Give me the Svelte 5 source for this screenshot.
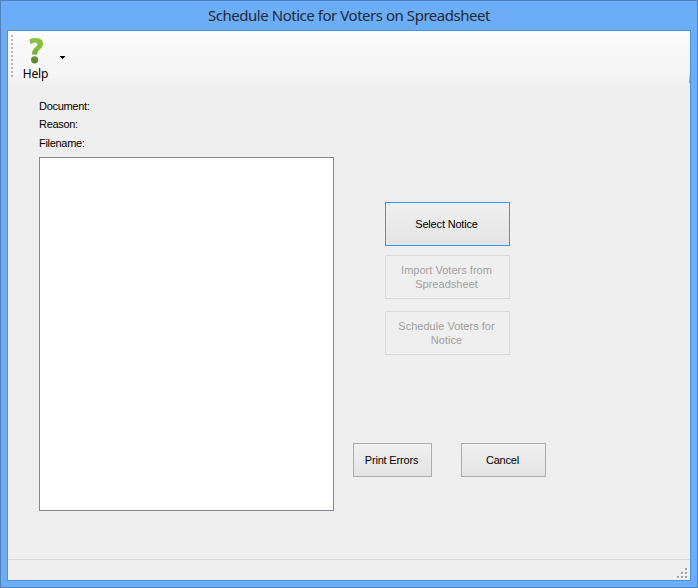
<script>
  const fields = ['Document:', 'Reason:', 'Filename:'];
  const gripDots = [[8, 0], [4, 4], [8, 4], [0, 8], [4, 8], [8, 8]];
</script>

<div class="window">
  <header class="title"><span>Schedule Notice for Voters on Spreadsheet</span></header>
  <div class="client">
    <div class="toolbar">
      <svg class="handle" width="2" height="44" viewBox="0 0 2 44">
        {#each Array(11) as _, i}
          <rect x="0" y={i * 4} width="2" height="2" fill="#b9b9b9" />
        {/each}
      </svg>
      <div class="help">
        <svg width="16" height="26" viewBox="0 0 16 26">
          <defs>
            <linearGradient id="leaf" gradientUnits="userSpaceOnUse" x1="0" y1="0" x2="0" y2="26">
              <stop offset="0" stop-color="#8cc63f" />
              <stop offset="0.4" stop-color="#83bb3c" />
              <stop offset="1" stop-color="#557f2c" />
            </linearGradient>
          </defs>
          <path d="M1.3 1.5C3.3.6 5.5.1 7.9.1C12.3.1 15 2.2 15 5.7C15 8.4 13.6 10 11.3 11.9C9.7 13.2 9.2 14.2 9.2 16.6H4.1C4 13.3 4.8 11.5 7.1 9.5C8.7 8.1 9.3 7.3 9.3 6.1C9.3 5 8.6 4.4 7.2 4.4C5.6 4.4 4.2 5.1 2.5 6.3Z" fill="url(#leaf)" />
          <circle cx="6.6" cy="21.8" r="3.6" fill="url(#leaf)" />
        </svg>
        <span>Help</span>
      </div>
      <svg class="arrow" width="5" height="3" viewBox="0 0 5 3" shape-rendering="crispEdges">
        <path d="M0 0H5V1H4V2H3V3H2V2H1V1H0Z" fill="#000" />
      </svg>
      <i class="edge"></i>
    </div>
    <main>
      <section class="left">
        <div class="fields">
          {#each fields as field}<div>{field}</div>{/each}
        </div>
        <div class="list"></div>
      </section>
      <section class="right">
        <div class="steps">
          <button class="focused"><span>Select Notice</span></button>
          <button class="off" disabled><span class="wide">Import Voters from<br />Spreadsheet</span></button>
          <button class="off last" disabled><span class="wide">Schedule Voters for<br />Notice</span></button>
        </div>
        <div class="actions">
          <button class="print"><span>Print Errors</span></button>
          <button class="cancel"><span>Cancel</span></button>
        </div>
      </section>
    </main>
    <footer>
      <svg width="11" height="11" viewBox="0 0 11 11" shape-rendering="crispEdges">
        {#each gripDots as [x, y]}
          <rect x={x + 1} y={y + 1} width="2" height="2" fill="#fff" />
          <rect {x} {y} width="2" height="2" fill="#a0a0a0" />
        {/each}
      </svg>
    </footer>
  </div>
</div>

<style>
  .window {
    box-sizing: border-box;
    width: 698px;
    height: 588px;
    padding: 0 6px 6px;
    border: 1px solid #4f82bd;
    background: #6badf6;
    font: 11px/14px "Liberation Sans", Arial, sans-serif;
    letter-spacing: -0.18px;
    color: #000;
    overflow: hidden;
  }
  .title {
    height: 29px;
    display: flex;
    justify-content: center;
    font: 15px/28px "Noto Sans", "Open Sans", sans-serif;
    letter-spacing: -0.46px;
    color: #222a33;
    white-space: nowrap;
  }
  .client {
    box-sizing: border-box;
    width: 684px;
    height: 551px;
    border: 1px solid #5090da;
    background: #efefef;
    display: flex;
    flex-direction: column;
  }
  .toolbar {
    height: 56px;
    flex: none;
    display: flex;
    align-items: flex-start;
    background: linear-gradient(#fdfdfd 0, #f8f8f8 18px, #f6f6f6 42px, #efefef 54px);
  }
  .handle { margin: 4px 0 0 3px; }
  .help {
    width: 45px;
    padding-top: 7px;
    display: flex;
    flex-direction: column;
    align-items: center;
    font: 12px/19px "Noto Sans", "Open Sans", sans-serif;
    letter-spacing: -0.1px;
  }
  .arrow { margin: 25px 0 0 2px; }
  .edge {
    width: 1px;
    height: 10px;
    margin: 42px 0 0 auto;
    background: linear-gradient(#eee, #999);
  }
  main {
    flex: 1;
    display: flex;
  }
  .left { padding-left: 31px; width: 295px; }
  .fields {
    height: 70px;
    box-sizing: border-box;
    padding-top: 12px;
    letter-spacing: -0.3px;
  }
  .fields div { height: 18px; line-height: 15px; }
  .fields div:last-child { margin-top: 1px; }
  .list {
    box-sizing: border-box;
    height: 354px;
    border: 1px solid #828790;
    background: #fff;
  }
  .right { padding: 115px 0 0 19px; }
  .steps {
    margin-left: 32px;
    width: 125px;
    display: flex;
    flex-direction: column;
  }
  button {
    box-sizing: border-box;
    padding: 0 2px 0 0;
    margin: 0;
    font: inherit;
    letter-spacing: inherit;
    color: #000;
    text-align: center;
    border: 1px solid #acacac;
    border-radius: 0;
    background: linear-gradient(#f0f0f0, #e4e4e4);
  }
  .steps button { height: 44px; }
  .focused { border-color: #3399ff; margin-bottom: 9px; }
  .off {
    color: #a0a0a0;
    border-color: #d9d9d9;
    background: #efefef;
  }
  .wide { letter-spacing: 0.02px; }
  .last { margin-top: 12px; }
  .actions {
    margin-top: 88px;
    display: flex;
    gap: 29px;
  }
  .actions button { height: 34px; }
  .print { width: 79px; }
  .cancel { width: 85px; }
  footer {
    box-sizing: border-box;
    height: 21px;
    border-top: 1px solid #d7d7d7;
    display: flex;
    justify-content: flex-end;
    padding: 8px 2px 0 0;
  }
</style>
